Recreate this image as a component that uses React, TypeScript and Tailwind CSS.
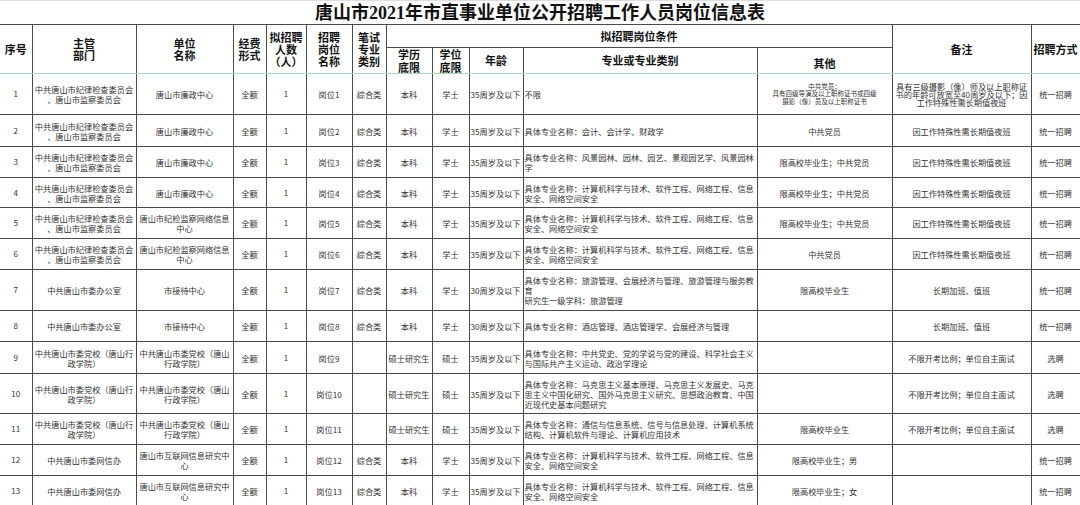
import React from "react";

interface JobRow {
  no: string;
  dept: string;
  unit: string;
  post: string;
  exam: string;
  edu: string;
  degree: string;
  age: string;
  major: string;
  other: string;
  note: string;
  method: string;
  h: string;
}

const CCP = "中共唐山市纪律检查委员会\n、唐山市监察委员会";
const SCHOOL_DEPT = "中共唐山市委党校（唐山行\n政学院）";
const SCHOOL_UNIT = "中共唐山市委党校（唐山\n行政学院）";
const CS = "具体专业名称：计算机科学与技术、软件工程、网络工程、信息\n安全、网络空间安全";
const NIGHT = "因工作特殊性需长期值夜班";
const RATIO = "不限开考比例；单位自主面试";

const rows: JobRow[] = [
  { no: "1", dept: CCP, unit: "唐山市廉政中心", post: "岗位1", exam: "综合类", edu: "本科", degree: "学士", age: "35周岁及以下", major: "不限", other: "", note: "", method: "统一招聘", h: "h-[41px]" },
  { no: "2", dept: CCP, unit: "唐山市廉政中心", post: "岗位2", exam: "综合类", edu: "本科", degree: "学士", age: "35周岁及以下", major: "具体专业名称：会计、会计学、财政学", other: "中共党员", note: NIGHT, method: "统一招聘", h: "h-[32px]" },
  { no: "3", dept: CCP, unit: "唐山市廉政中心", post: "岗位3", exam: "综合类", edu: "本科", degree: "学士", age: "35周岁及以下", major: "具体专业名称：风景园林、园林、园艺、景观园艺学、风景园林\n学", other: "限高校毕业生；中共党员", note: NIGHT, method: "统一招聘", h: "h-[31px]" },
  { no: "4", dept: CCP, unit: "唐山市廉政中心", post: "岗位4", exam: "综合类", edu: "本科", degree: "学士", age: "35周岁及以下", major: CS, other: "限高校毕业生；中共党员", note: NIGHT, method: "统一招聘", h: "h-[30px]" },
  { no: "5", dept: CCP, unit: "唐山市纪检监察网络信息\n中心", post: "岗位5", exam: "综合类", edu: "本科", degree: "学士", age: "35周岁及以下", major: CS, other: "限高校毕业生；中共党员", note: NIGHT, method: "统一招聘", h: "h-[31px]" },
  { no: "6", dept: CCP, unit: "唐山市纪检监察网络信息\n中心", post: "岗位6", exam: "综合类", edu: "本科", degree: "学士", age: "35周岁及以下", major: CS, other: "中共党员", note: NIGHT, method: "统一招聘", h: "h-[31px]" },
  { no: "7", dept: "中共唐山市委办公室", unit: "市接待中心", post: "岗位7", exam: "综合类", edu: "本科", degree: "学士", age: "30周岁及以下", major: "具体专业名称：旅游管理、会展经济与管理、旅游管理与服务教\n育\n研究生一级学科：旅游管理", other: "限高校毕业生", note: "长期加班、值班", method: "统一招聘", h: "h-[41px]" },
  { no: "8", dept: "中共唐山市委办公室", unit: "市接待中心", post: "岗位8", exam: "综合类", edu: "本科", degree: "学士", age: "30周岁及以下", major: "具体专业名称：酒店管理、酒店管理学、会展经济与管理", other: "", note: "长期加班、值班", method: "统一招聘", h: "h-[31px]" },
  { no: "9", dept: SCHOOL_DEPT, unit: SCHOOL_UNIT, post: "岗位9", exam: "", edu: "硕士研究生", degree: "硕士", age: "35周岁及以下", major: "具体专业名称：中共党史、党的学说与党的建设、科学社会主义\n与国际共产主义运动、政治学理论", other: "", note: RATIO, method: "选聘", h: "h-[32px]" },
  { no: "10", dept: SCHOOL_DEPT, unit: SCHOOL_UNIT, post: "岗位10", exam: "", edu: "硕士研究生", degree: "硕士", age: "35周岁及以下", major: "具体专业名称：马克思主义基本原理、马克思主义发展史、马克\n思主义中国化研究、国外马克思主义研究、思想政治教育、中国\n近现代史基本问题研究", other: "", note: RATIO, method: "选聘", h: "h-[40px]" },
  { no: "11", dept: SCHOOL_DEPT, unit: SCHOOL_UNIT, post: "岗位11", exam: "", edu: "硕士研究生", degree: "硕士", age: "35周岁及以下", major: "具体专业名称：通信与信息系统、信号与信息处理、计算机系统\n结构、计算机软件与理论、计算机应用技术", other: "限高校毕业生", note: RATIO, method: "选聘", h: "h-[31px]" },
  { no: "12", dept: "中共唐山市委网信办", unit: "唐山市互联网信息研究中\n心", post: "岗位12", exam: "综合类", edu: "本科", degree: "学士", age: "35周岁及以下", major: CS, other: "限高校毕业生；男", note: "", method: "统一招聘", h: "h-[31px]" },
  { no: "13", dept: "中共唐山市委网信办", unit: "唐山市互联网信息研究中\n心", post: "岗位13", exam: "综合类", edu: "本科", degree: "学士", age: "35周岁及以下", major: CS, other: "限高校毕业生；女", note: "", method: "统一招聘", h: "h-[31px]" },
];

const td = "border border-[#4a4a4a] p-0 text-center align-middle whitespace-pre overflow-hidden";
const th = "border border-[#4a4a4a] p-0 text-center align-middle font-bold text-[11px] leading-[12.5px] text-[#111] whitespace-pre";

export default function App() {
  return (
    <div className="w-[1080px] h-[505px] overflow-hidden bg-white font-['Noto_Sans_CJK_SC',sans-serif]">
      <div className="h-[24px] border-t border-[#dedede] flex items-center justify-center">
        <h1 className="text-[18px] leading-[20px] font-bold text-[#111] font-['Liberation_Serif','Noto_Sans_CJK_SC',serif]">
          唐山市2021年市直事业单位公开招聘工作人员岗位信息表
        </h1>
      </div>
      <table className="table-fixed border-collapse w-[1080px]">
        <colgroup>
          <col className="w-[32px]" />
          <col className="w-[104px]" />
          <col className="w-[97px]" />
          <col className="w-[33px]" />
          <col className="w-[40px]" />
          <col className="w-[46px]" />
          <col className="w-[34px]" />
          <col className="w-[46px]" />
          <col className="w-[37px]" />
          <col className="w-[54px]" />
          <col className="w-[234px]" />
          <col className="w-[135px]" />
          <col className="w-[139px]" />
          <col className="w-[49px]" />
        </colgroup>
        <thead>
          <tr className="h-[23px]">
            <th rowSpan={2} className={`${th} border-l-0 border-b-[#a9d8bb]`}>序号</th>
            <th rowSpan={2} className={`${th} border-b-[#a9d8bb]`}>{"主管\n部门"}</th>
            <th rowSpan={2} className={`${th} border-b-[#a9d8bb]`}>{"单位\n名称"}</th>
            <th rowSpan={2} className={`${th} border-b-[#a9d8bb]`}>{"经费\n形式"}</th>
            <th rowSpan={2} className={`${th} border-b-[#a9d8bb] leading-[12px]`}>{"拟招聘\n人数\n（人）"}</th>
            <th rowSpan={2} className={`${th} border-b-[#a9d8bb] leading-[12px]`}>{"招聘\n岗位\n名称"}</th>
            <th rowSpan={2} className={`${th} border-b-[#a9d8bb] leading-[12px]`}>{"笔试\n专业\n类别"}</th>
            <th colSpan={5} className={`${th} font-semibold`}>拟招聘岗位条件</th>
            <th rowSpan={2} className={`${th} border-b-[#a9d8bb]`}>备注</th>
            <th rowSpan={2} className={`${th} border-b-[#a9d8bb]`}>招聘方式</th>
          </tr>
          <tr className="h-[25px]">
            <th className={`${th} border-b-[#a9d8bb]`}>{"学历\n底限"}</th>
            <th className={`${th} border-b-[#a9d8bb]`}>{"学位\n底限"}</th>
            <th className={`${th} border-b-[#a9d8bb]`}>年龄</th>
            <th className={`${th} border-b-[#a9d8bb]`}>专业或专业类别</th>
            <th className={`${th} border-b-[#a9d8bb] pt-[6px]`}>其他</th>
          </tr>
        </thead>
        <tbody className="text-[8.2px] leading-[10px] text-[#333]">
          {rows.map((r) => (
            <tr key={r.no} className={r.h}>
              <td className={`${td} border-l-0 text-[8px]`}>{r.no}</td>
              <td className={td}>{r.dept}</td>
              <td className={td}>{r.unit}</td>
              <td className={td}>全额</td>
              <td className={`${td} text-[8px]`}>1</td>
              <td className={td}>{r.post}</td>
              <td className={td}>{r.exam}</td>
              <td className={td}>{r.edu}</td>
              <td className={td}>{r.degree}</td>
              <td className={`${td} text-left pl-[1px]`}>{r.age}</td>
              <td className={`${td} text-left pl-[1px]`}>{r.major}</td>
              {r.no === "1" ? (
                <td className={`${td} text-[6.5px] leading-[7.6px]`}>
                  {"中共党员；\n具有四级导演及以上职称证书或四级\n摄影（像）员及以上职称证书"}
                </td>
              ) : (
                <td className={td}>{r.other}</td>
              )}
              {r.no === "1" ? (
                <td className={`${td} leading-[8.3px]`}>
                  {"具有三级摄影（像）师及以上职称证\n书的年龄可放宽至40周岁及以下；因\n工作特殊性需长期值夜班"}
                </td>
              ) : (
                <td className={td}>{r.note}</td>
              )}
              <td className={td}>{r.method}</td>
            </tr>
          ))}
        </tbody>
      </table>
    </div>
  );
}
